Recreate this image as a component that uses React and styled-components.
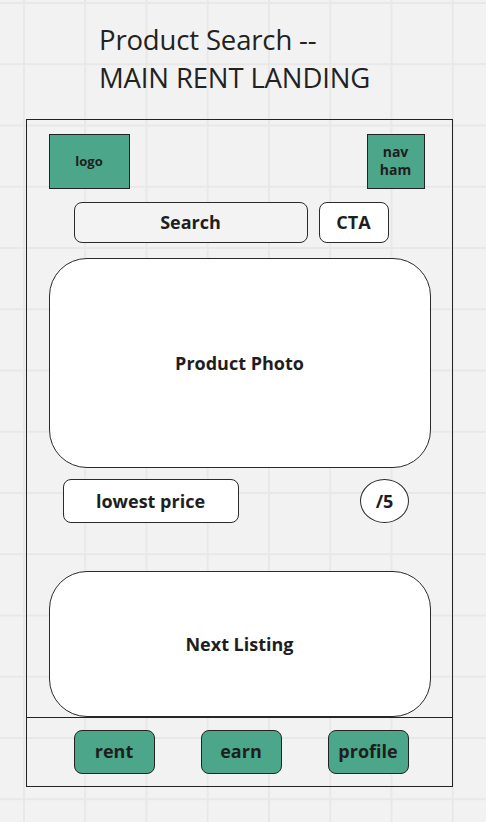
import styled, { createGlobalStyle } from "styled-components";

const GlobalStyle = createGlobalStyle`
  html, body {
    margin: 0;
    padding: 0;
  }
  body {
    font-family: "Open Sans", "Noto Sans", sans-serif;
    color: #1e1e1e;
    background-color: #f2f2f2;
    background-image:
      linear-gradient(to right, #e8e8e8 2px, transparent 2px),
      linear-gradient(to bottom, #e8e8e8 2px, transparent 2px);
    background-size: 61.25px 61.25px;
    background-position: 23px 2px;
  }
`;

const Canvas = styled.div`
  width: 486px;
  height: 822px;
  box-sizing: border-box;
  padding-top: 21px;
  display: flex;
  flex-direction: column;
`;

const Title = styled.h1`
  margin: 0 0 0 99px;
  font-size: 27.5px;
  font-weight: 400;
  line-height: 38px;
  letter-spacing: -0.15px;
  color: #222;
`;

const Phone = styled.div`
  margin: 22px 0 0 26px;
  width: 427px;
  height: 668px;
  box-sizing: border-box;
  border: 1.5px solid #232323;
  display: flex;
  flex-direction: column;
`;

const Body = styled.div`
  flex: 1;
  display: flex;
  flex-direction: column;
  padding: 13.5px 0 0 21.5px;
`;

const TopBar = styled.div`
  display: flex;
  justify-content: space-between;
  padding-right: 27.5px;
`;

const GreenBox = styled.div`
  width: ${(p) => p.$w}px;
  height: ${(p) => p.$h || 55}px;
  box-sizing: border-box;
  background: #4ba68a;
  border: 1.5px solid #232323;
  border-radius: ${(p) => p.$r || 0}px;
  display: flex;
  align-items: center;
  justify-content: center;
  text-align: center;
  font-weight: 700;
  font-size: ${(p) => p.$fs || 13}px;
  line-height: ${(p) => p.$lh || 1.3};
  color: #1e1e1e;
`;

const SearchRow = styled.div`
  display: flex;
  gap: 11px;
  margin: 13px 0 0 25px;
`;

const Pill = styled.div`
  width: ${(p) => p.$w}px;
  height: ${(p) => p.$h || 41}px;
  box-sizing: border-box;
  background: ${(p) => (p.$white ? "#fff" : "#f3f3f3")};
  border: 1.2px solid #2a2a2a;
  border-radius: ${(p) => p.$r || 8}px;
  display: flex;
  align-items: center;
  justify-content: center;
  font-weight: 700;
  font-size: 18px;
  color: #1e1e1e;
`;

const Card = styled.div`
  width: 382px;
  height: ${(p) => p.$h}px;
  box-sizing: border-box;
  background: #fff;
  border: 1.5px solid #2a2a2a;
  border-radius: 38px;
  margin-top: ${(p) => p.$mt}px;
  display: flex;
  align-items: center;
  justify-content: center;
  font-weight: 700;
  font-size: 18px;
  color: #1e1e1e;
`;

const PriceRow = styled.div`
  display: flex;
  justify-content: space-between;
  margin: 11px 0 0 14px;
  padding-right: 43px;
`;

const Rating = styled.div`
  width: 49px;
  height: 44px;
  box-sizing: border-box;
  border: 1.2px solid #2a2a2a;
  border-radius: 50%;
  background: #fff;
  display: flex;
  align-items: center;
  justify-content: center;
  font-weight: 700;
  font-size: 18px;
`;

const Footer = styled.div`
  height: 70px;
  box-sizing: border-box;
  border-top: 1.5px solid #232323;
  display: flex;
  gap: 46px;
  padding: 12.5px 0 0 46.5px;
`;

export default function App() {
  return (
    <>
      <GlobalStyle />
      <Canvas>
        <Title>
          Product Search --
          <br />
          MAIN RENT LANDING
        </Title>
        <Phone>
          <Body>
            <TopBar>
              <GreenBox $w={81}>logo</GreenBox>
              <GreenBox $w={58} $fs={14}>
                nav
                <br />
                ham
              </GreenBox>
            </TopBar>
            <SearchRow>
              <Pill $w={234}>Search</Pill>
              <Pill $w={70} $white>CTA</Pill>
            </SearchRow>
            <Card $h={210} $mt={15}>Product Photo</Card>
            <PriceRow>
              <Pill $w={176} $h={44} $white>lowest price</Pill>
              <Rating>/5</Rating>
            </PriceRow>
            <Card $h={146} $mt={48}>Next Listing</Card>
          </Body>
          <Footer>
            <GreenBox $w={81} $h={44} $r={8} $fs={18}>rent</GreenBox>
            <GreenBox $w={81} $h={44} $r={8} $fs={18}>earn</GreenBox>
            <GreenBox $w={81} $h={44} $r={8} $fs={18}>profile</GreenBox>
          </Footer>
        </Phone>
      </Canvas>
    </>
  );
}
